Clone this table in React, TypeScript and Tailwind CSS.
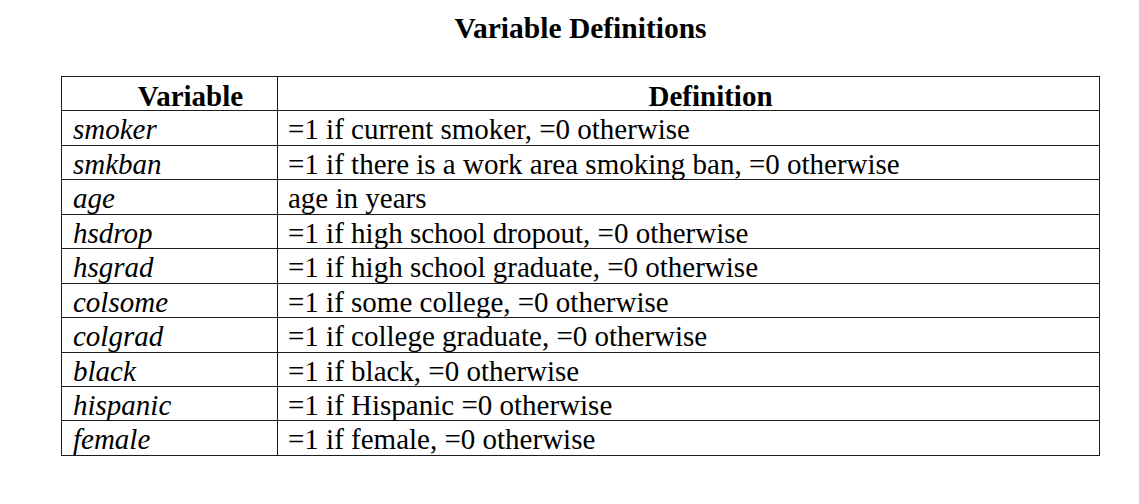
const rows: [string, string][] = [
  ["smoker", "=1 if current smoker, =0 otherwise"],
  ["smkban", "=1 if there is a work area smoking ban, =0 otherwise"],
  ["age", "age in years"],
  ["hsdrop", "=1 if high school dropout, =0 otherwise"],
  ["hsgrad", "=1 if high school graduate, =0 otherwise"],
  ["colsome", "=1 if some college, =0 otherwise"],
  ["colgrad", "=1 if college graduate, =0 otherwise"],
  ["black", "=1 if black, =0 otherwise"],
  ["hispanic", "=1 if Hispanic =0 otherwise"],
  ["female", "=1 if female, =0 otherwise"],
]

export default function App() {
  return (
    <div className="w-[1139px] h-[504px] bg-white text-black font-['Liberation_Serif','Times_New_Roman',serif] text-[29px] leading-[33.45px]">
      <div className="ml-[61px] w-[1039px]">
        <h1 className="h-[44px] pt-[11.5px] text-center text-[29.5px] font-bold">Variable Definitions</h1>

        <div className="mt-[32px] border border-[#1c1c1c]">
          {/* header */}
          <div className="flex h-[34.45px] border-b border-[#1c1c1c] font-bold">
            <div className="w-[216px] shrink-0 border-r border-[#1c1c1c] pt-[3px] pl-[42px] text-center">Variable</div>
            <div className="flex-1 pt-[3px] pl-[44px] text-center">Definition</div>
          </div>

          {rows.map(([name, def], i) => (
            <div
              key={name}
              className={i < rows.length - 1 ? "flex h-[34.45px] border-b border-[#1c1c1c]" : "flex h-[33.45px]"}
            >
              <div className="w-[216px] shrink-0 border-r border-[#1c1c1c] pt-[2px] pl-[11px] italic">{name}</div>
              <div className="flex-1 pt-[2px] pl-[10px]">{def}</div>
            </div>
          ))}
        </div>
      </div>
    </div>
  )
}
